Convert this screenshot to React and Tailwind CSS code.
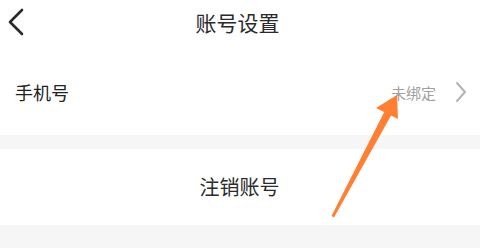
import React from "react";

export default function App() {
  return (
    <div className="relative w-[480px] h-[248px] bg-[#f6f6f6] overflow-hidden" style={{ fontFamily: '"Noto Sans CJK SC", "Noto Sans", sans-serif' }}>
      <div className="bg-white h-[48px] flex items-center relative">
        <svg className="absolute left-[6px] top-[7px]" width="22" height="30" viewBox="0 0 22 30">
          <path d="M16 3 L4 15 L16 27" fill="none" stroke="#2a2a2a" strokeWidth="2.6" strokeLinecap="round" strokeLinejoin="round" />
        </svg>
        <div className="w-full text-center text-[21px] leading-none text-[#2a2a2a] pr-[5px] -mt-[3px]">账号设置</div>
      </div>
      <div className="bg-white h-[87px] flex items-center pl-[15px] pr-[12px]">
        <div className="text-[18px] leading-none text-[#222] flex-1 mt-[1px]">手机号</div>
        <div className="text-[15px] leading-none text-[#a0a0a0] mr-[18px] mt-[1px]">未绑定</div>
        <svg width="14" height="22" viewBox="0 0 14 22">
          <path d="M3 2 L11 11 L3 20" fill="none" stroke="#b3b3b3" strokeWidth="2" strokeLinecap="round" strokeLinejoin="round" />
        </svg>
      </div>
      <div className="h-[14px]" />
      <div className="bg-white h-[76px] flex items-center justify-center">
        <div className="text-[20px] leading-none text-[#2a2a2a] pr-[1px]">注销账号</div>
      </div>
      <svg className="absolute left-0 top-0 pointer-events-none" width="480" height="248" viewBox="0 0 480 248">
        <polygon points="331.5,216 334,217.5 393,112 386,108.5" fill="#ff7f35" />
        <polygon points="376,108 397,95 398,119" fill="#ff7f35" />
      </svg>
    </div>
  );
}
